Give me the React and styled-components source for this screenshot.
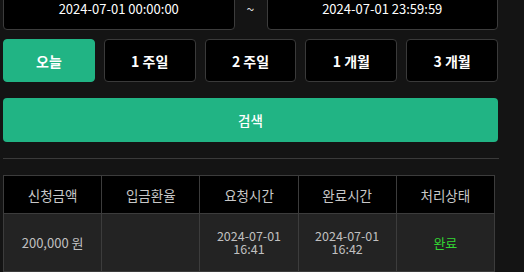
import React from 'react';
import styled, { createGlobalStyle } from 'styled-components';

const GlobalStyle = createGlobalStyle`
  body {
    margin: 0;
    background: #141414;
    font-family: "Noto Sans CJK KR", "Noto Sans", sans-serif;
    overflow: hidden;
  }
`;

const Page = styled.div`
  width: 495px;
  margin: -13px 0 0 3px;
  display: flex;
  flex-direction: column;
`;

const DateRow = styled.div`
  display: grid;
  grid-template-columns: 1fr 32px 1fr;
  height: 43px;
`;

const DateBox = styled.div`
  display: flex;
  align-items: center;
  justify-content: center;
  background: #000;
  border: 1px solid #3c3c3c;
  border-radius: 4px;
  color: #fff;
  font-size: 13px;
`;

const Tilde = styled.div`
  display: flex;
  align-items: center;
  justify-content: center;
  color: #ddd;
  font-size: 14px;
`;

const RangeRow = styled.div`
  display: grid;
  grid-template-columns: repeat(5, 1fr);
  gap: 9px;
  margin-top: 9px;
`;

const RangeButton = styled.button`
  height: 43px;
  border-radius: 4px;
  border: 1px solid ${p => (p.active ? '#21b484' : '#3a3a3a')};
  background: ${p => (p.active ? '#21b484' : '#000')};
  color: #fff;
  font-family: inherit;
  font-size: 14px;
  font-weight: 700;
  padding: 0;
`;

const SearchButton = styled.button`
  height: 44px;
  margin-top: 16px;
  border: none;
  border-radius: 4px;
  background: #21b484;
  color: #fff;
  font-family: inherit;
  font-size: 13.5px;
  font-weight: 500;
`;

const Divider = styled.hr`
  margin: 16px 0 0;
  border: none;
  border-top: 1px solid #3a3a3a;
  width: 496px;
`;

const Table = styled.table`
  width: 492px;
  margin-top: 16px;
  border-collapse: collapse;
  table-layout: fixed;
  border: 1px solid #3c3c3c;
`;

const Th = styled.th`
  height: 37px;
  padding: 0;
  background: #000;
  border: 1px solid #3c3c3c;
  color: #c8c8c8;
  font-size: 13.5px;
  font-weight: 400;
`;

const Td = styled.td`
  height: 57px;
  padding: 0;
  background: #232323;
  border: 1px solid #3c3c3c;
  color: ${p => p.color || '#c0c0c0'};
  font-size: ${p => (p.small ? '12.5px' : '13px')};
  line-height: ${p => (p.small ? '12.5px' : 'normal')};
  text-align: center;
`;

const ranges = ['오늘', '1 주일', '2 주일', '1 개월', '3 개월'];
const headers = ['신청금액', '입금환율', '요청시간', '완료시간', '처리상태'];

export default function App() {
  return (
    <>
      <GlobalStyle />
      <Page>
        <DateRow>
          <DateBox>2024-07-01 00:00:00</DateBox>
          <Tilde>~</Tilde>
          <DateBox>2024-07-01 23:59:59</DateBox>
        </DateRow>
        <RangeRow>
          {ranges.map((r, i) => (
            <RangeButton key={r} active={i === 0}>{r}</RangeButton>
          ))}
        </RangeRow>
        <SearchButton>검색</SearchButton>
        <Divider />
        <Table>
          <thead>
            <tr>
              {headers.map(h => <Th key={h}>{h}</Th>)}
            </tr>
          </thead>
          <tbody>
            <tr>
              <Td>200,000 원</Td>
              <Td></Td>
              <Td small>2024-07-01<br />16:41</Td>
              <Td small>2024-07-01<br />16:42</Td>
              <Td color="#33d633">완료</Td>
            </tr>
          </tbody>
        </Table>
      </Page>
    </>
  );
}
